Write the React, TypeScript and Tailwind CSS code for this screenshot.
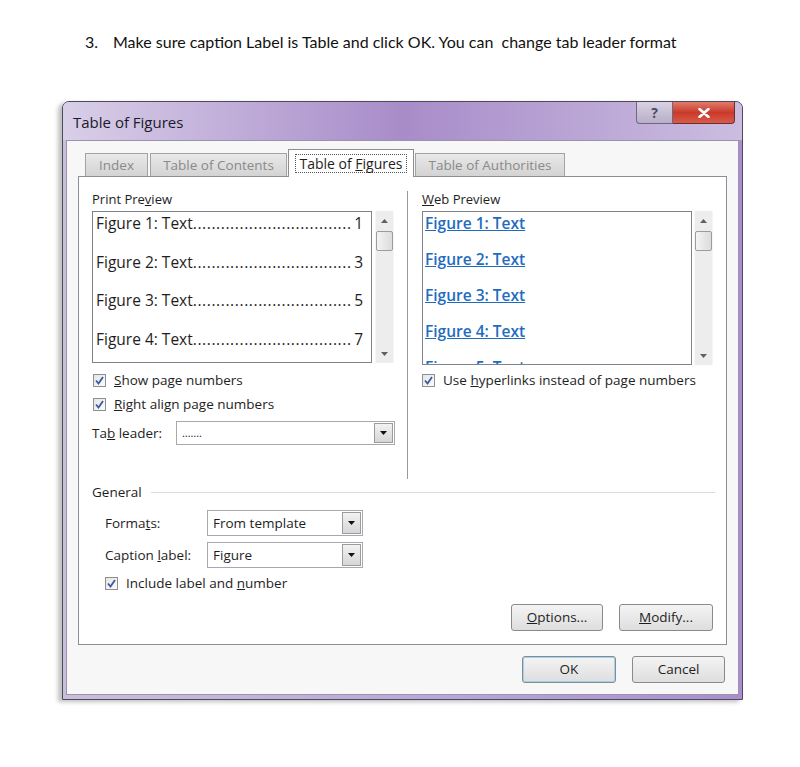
import React from 'react';

const ui = { fontFamily: '"Open Sans", "Noto Sans", sans-serif' };

function CheckBox() {
  return (
    <span className="inline-flex items-center justify-center w-[13px] h-[13px] border border-[#8e8f8f] bg-gradient-to-br from-[#e6e6e6] to-[#fbfbfb] shrink-0">
      <svg width="9" height="9" viewBox="0 0 9 9">
        <path d="M1 4.5 L3.5 7.5 L8 1" fill="none" stroke="#3d5aa0" strokeWidth="1.8" />
      </svg>
    </span>
  );
}

function Check({ children, className = '' }: { children: React.ReactNode; className?: string }) {
  return (
    <div className={`flex items-center gap-[8px] h-[20px] text-[13.5px] text-[#1e1e1e] ${className}`}>
      <CheckBox />
      <span>{children}</span>
    </div>
  );
}

function Select({ value, className = '', small = false }: { value: string; className?: string; small?: boolean }) {
  return (
    <div className={`flex border border-[#a7a9b0] bg-white ${className}`}>
      <div className={`flex-1 flex items-center pl-[5px] text-[#1e1e1e] ${small ? 'text-[11px]' : 'text-[13.5px]'}`}>{value}</div>
      <div className="w-[19px] m-px flex items-center justify-center border border-[#9c9c9c] bg-gradient-to-b from-[#f2f2f2] to-[#d6d6d6]">
        <svg width="7" height="4" viewBox="0 0 7 4">
          <path d="M0 0 H7 L3.5 4 Z" fill="#111" />
        </svg>
      </div>
    </div>
  );
}

function ScrollBar() {
  return (
    <div className="w-[19px] flex flex-col items-center bg-[#ededed] border-l border-r border-[#f6f6f6]">
      <div className="h-[20px] flex items-center justify-center">
        <svg width="7" height="4" viewBox="0 0 7 4">
          <path d="M0 4 H7 L3.5 0 Z" fill="#606060" />
        </svg>
      </div>
      <div className="w-[17px] h-[20px] rounded-[2px] border border-[#9c9c9c] bg-gradient-to-r from-[#f4f4f4] to-[#dcdcdc]" />
      <div className="flex-1" />
      <div className="h-[18px] flex items-center justify-center">
        <svg width="7" height="4" viewBox="0 0 7 4">
          <path d="M0 0 H7 L3.5 4 Z" fill="#606060" />
        </svg>
      </div>
    </div>
  );
}

function Button({ children, className = '' }: { children: React.ReactNode; className?: string }) {
  return (
    <div className={`h-[27px] flex items-center justify-center rounded-[3px] border border-[#8a8a8a] bg-gradient-to-b from-[#f4f4f4] to-[#dedede] text-[13.5px] text-[#1e1e1e] ${className}`}>
      {children}
    </div>
  );
}

const printItems = [
  ['Figure 1: Text', '1'],
  ['Figure 2: Text', '3'],
  ['Figure 3: Text', '5'],
  ['Figure 4: Text', '7'],
];

export default function App() {
  return (
    <div className="w-[800px] h-[767px] bg-white overflow-hidden pt-[32px]">
      {/* Instruction line */}
      <div className="flex pl-[85px] text-[16px] leading-[20px] text-[#111]" style={{ fontFamily: 'Lato, "Open Sans", sans-serif' }}>
        <span className="w-[28px]">3.</span>
        <span>Make sure caption Label is Table and click OK. You can&nbsp; change tab leader format</span>
      </div>

      {/* Dialog window */}
      <div
        className="ml-[62px] mt-[49px] w-[681px] h-[599px] flex flex-col border border-[#4d4a5a] rounded-t-[7px] bg-gradient-to-r from-[#c9bfdb] via-[#bca9da] to-[#a88ed0] shadow-[-4px_2px_4px_rgba(0,0,0,0.25)]"
        style={ui}
      >
        {/* Title bar */}
        <div className="h-[38px] flex items-start justify-between bg-gradient-to-r from-[#d9cfe8] via-[#a88cc9] to-[#cbbde0] rounded-t-[6px]">
          <div className="pl-[10px] pt-[9px] text-[15px] text-[#1a1a2a]">Table of Figures</div>
          <div className="flex mr-[7px]">
            <div className="w-[37px] h-[22px] flex items-center justify-center rounded-bl-[4px] border border-[#6f6880] border-t-0 bg-gradient-to-b from-[#d8d2e2] to-[#b8aec9] text-[14px] font-bold text-[#4a4a62]">
              ?
            </div>
            <div className="w-[62px] h-[22px] flex items-center justify-center rounded-br-[4px] border border-l-0 border-t-0 border-[#6a3030] bg-gradient-to-b from-[#e2796a] via-[#c9392c] to-[#d85a48]">
              <svg width="12" height="10" viewBox="0 0 12 10">
                <path d="M1.5 1 L10.5 9 M10.5 1 L1.5 9" stroke="#fff" strokeWidth="2.6" strokeLinecap="round" />
              </svg>
            </div>
          </div>
        </div>

        {/* Client area */}
        <div className="mx-[3px] mb-[4px] flex-1 flex flex-col border border-[#9a94aa] bg-[#f7f7f7]">
          {/* Tabs */}
          <div className="mt-[8px] ml-[11px] flex items-end h-[27px] pl-[7px] text-[13.5px]">
            <div className="h-[23px] w-[63px] flex items-center justify-center border border-b-0 border-[#a3a3a3] bg-gradient-to-b from-[#e9e9e9] to-[#d3d3d3] text-[#8a8a8a]">Index</div>
            <div className="ml-[2px] h-[23px] w-[137px] flex items-center justify-center border border-b-0 border-[#a3a3a3] bg-gradient-to-b from-[#e9e9e9] to-[#d3d3d3] text-[#8a8a8a]">Table of Contents</div>
            <div className="relative -mb-px z-10 ml-px h-[28px] w-[126px] flex items-center justify-center border border-b-0 border-[#8b8e96] bg-white text-[14px] text-[#1e1e1e]">
              <span className="px-[3px] border border-dotted border-[#555] leading-[17px]">
                Table of <span className="underline">F</span>igures
              </span>
            </div>
            <div className="ml-px h-[23px] w-[150px] flex items-center justify-center border border-b-0 border-[#a3a3a3] bg-gradient-to-b from-[#e9e9e9] to-[#d3d3d3] text-[#8a8a8a]">Table of Authorities</div>
          </div>

          {/* Tab panel */}
          <div className="ml-[11px] w-[649px] h-[469px] flex flex-col border border-[#8b8e96] bg-white">
            {/* Previews */}
            <div className="h-[302px] flex items-start">
              {/* Print preview column */}
              <div className="ml-[13px] w-[303px] pt-[13px] flex flex-col">
                <div className="h-[18px] leading-[18px] text-[13px] text-[#1e1e1e]">
                  Print Pre<span className="underline">v</span>iew
                </div>
                <div className="mt-[3px] h-[152px] flex">
                  <div className="w-[280px] border border-[#7f838b] bg-white flex flex-col pl-[3px] pr-[8px] gap-[15.5px]">
                    {printItems.map(([label, page]) => (
                      <div key={label} className="flex items-end justify-between h-[23px] text-[15.5px] text-[#1e1e1e] leading-[23px] whitespace-nowrap">
                        <span>
                          {label}
                          <span className="tracking-[0.6px]">..................................</span>
                        </span>
                        <span>{page}</span>
                      </div>
                    ))}
                  </div>
                  <div className="ml-[3px] flex">
                    <ScrollBar />
                  </div>
                </div>
                <Check className="mt-[7px] ml-px">
                  <span className="underline">S</span>how page numbers
                </Check>
                <Check className="mt-[4px] ml-px">
                  <span className="underline">R</span>ight align page numbers
                </Check>
                <div className="mt-[7px] flex items-center">
                  <span className="w-[84px] text-[13.5px] text-[#1e1e1e]">
                    Ta<span className="underline">b</span> leader:
                  </span>
                  <Select value="……." small className="w-[219px] h-[24px]" />
                </div>
              </div>

              {/* Divider */}
              <div className="ml-[12px] mt-[14px] w-px h-[288px] bg-[#9a9a9a]" />

              {/* Web preview column */}
              <div className="ml-[14px] w-[291px] pt-[13px] flex flex-col">
                <div className="h-[18px] leading-[18px] text-[13px] text-[#1e1e1e]">
                  <span className="underline">W</span>eb Preview
                </div>
                <div className="mt-[3px] h-[154px] flex">
                  <div className="w-[270px] border border-[#7f838b] bg-white overflow-hidden flex flex-col pl-[2px] pt-px gap-[16px]">
                    {['Figure 1: Text', 'Figure 2: Text', 'Figure 3: Text', 'Figure 4: Text', 'Figure 5: Text'].map((t) => (
                      <div key={t} className="h-[20px] leading-[20px] text-[15.5px] font-semibold text-[#1f6cbf] underline shrink-0">
                        {t}
                      </div>
                    ))}
                  </div>
                  <div className="ml-[2px] flex">
                    <ScrollBar />
                  </div>
                </div>
                <Check className="mt-[5px]">
                  Use <span className="underline">h</span>yperlinks instead of page numbers
                </Check>
              </div>
            </div>

            {/* General */}
            <div className="mt-[4px] ml-[13px] mr-[11px] flex items-center h-[18px]">
              <span className="text-[13.5px] text-[#1e1e1e]">General</span>
              <div className="ml-[9px] flex-1 h-px bg-[#dcdcdc]" />
            </div>
            <div className="mt-[9px] ml-[26px] flex items-center">
              <span className="w-[102px] text-[13.5px] text-[#1e1e1e]">
                Forma<span className="underline">t</span>s:
              </span>
              <Select value="From template" className="w-[156px] h-[26px]" />
            </div>
            <div className="mt-[6px] ml-[26px] flex items-center">
              <span className="w-[102px] text-[13.5px] text-[#1e1e1e]">
                Caption <span className="underline">l</span>abel:
              </span>
              <Select value="Figure" className="w-[156px] h-[26px]" />
            </div>
            <Check className="mt-[5px] ml-[26px]">
              Include label and <span className="underline">n</span>umber
            </Check>
            <div className="mt-[11px] mr-[13px] flex justify-end gap-[16px]">
              <Button className="w-[92px]">
                <span className="underline">O</span>ptions...
              </Button>
              <Button className="w-[94px]">
                <span className="underline">M</span>odify...
              </Button>
            </div>
          </div>

          {/* Dialog buttons */}
          <div className="mt-[11px] mr-[13px] flex justify-end gap-[16px]">
            <Button className="w-[94px] border-[#3c9ad6] shadow-[inset_0_0_0_1px_#9fd3f3]">OK</Button>
            <Button className="w-[93px]">Cancel</Button>
          </div>
        </div>
      </div>
    </div>
  );
}
